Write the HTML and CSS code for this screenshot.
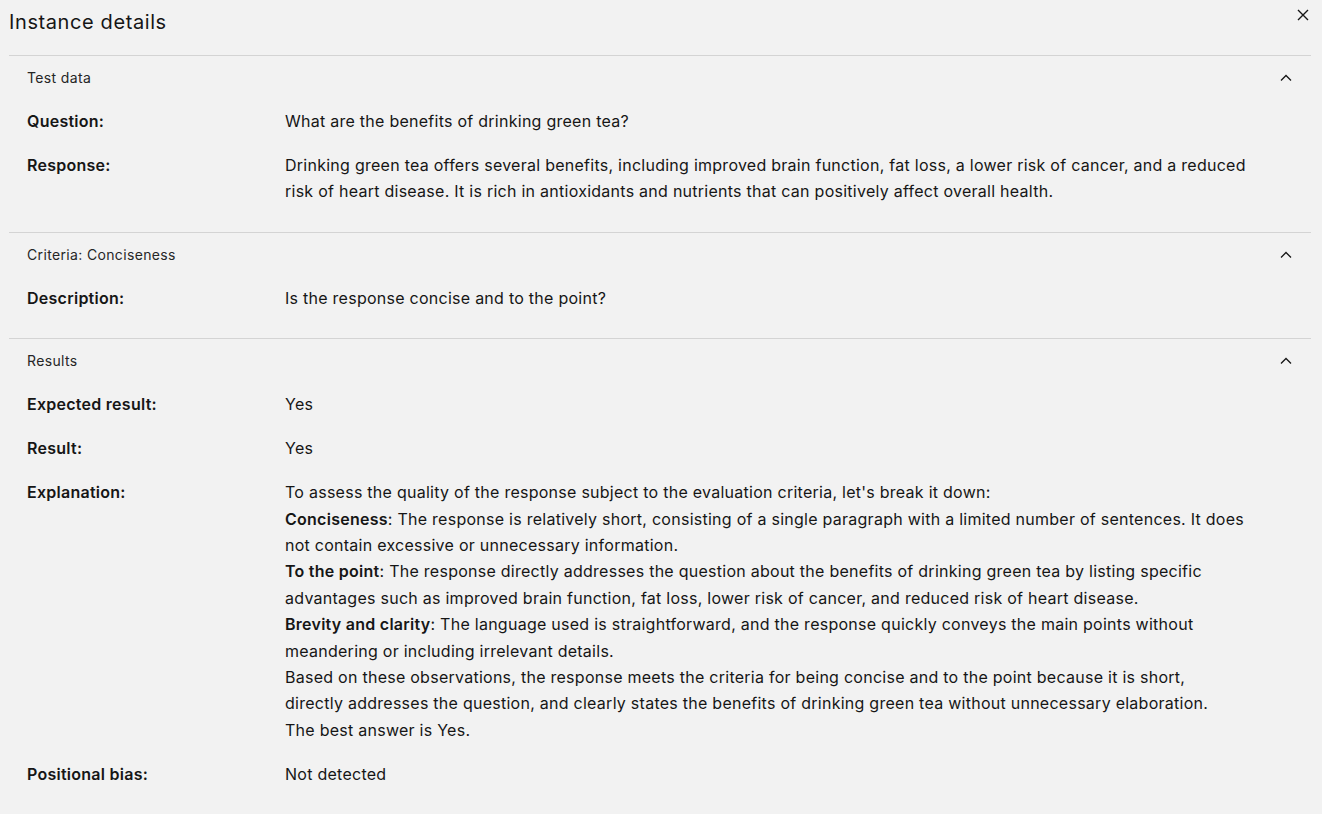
FILE: index.html
```html
<!DOCTYPE html>
<html lang="en">
<head>
<meta charset="utf-8">
<title>Instance details</title>
<link rel="stylesheet" href="styles.css">
</head>
<body>
<div class="modal">
  <header class="modal-header">
    <h2 class="modal-title">Instance details</h2>
    <button class="close-btn" aria-label="Close">
      <svg width="16" height="16" viewBox="0 0 16 16"><path d="M3 3 L13 13 M13 3 L3 13" stroke="#161616" stroke-width="1.4" fill="none"/></svg>
    </button>
  </header>

  <section class="acc">
    <div class="acc-head">
      <span class="acc-title">Test data</span>
      <svg class="chev" width="16" height="16" viewBox="0 0 16 16"><path d="M3 10.5 L8 5.5 L13 10.5" stroke="#161616" stroke-width="1.3" fill="none"/></svg>
    </div>
    <div class="acc-body">
      <div class="row"><div class="label">Question:</div><div class="value">What are the benefits of drinking green tea?</div></div>
      <div class="row"><div class="label">Response:</div><div class="value">Drinking green tea offers several benefits, including improved brain function, fat loss, a lower risk of cancer, and a reduced risk of heart disease. It is rich in antioxidants and nutrients that can positively affect overall health.</div></div>
    </div>
  </section>

  <section class="acc">
    <div class="acc-head">
      <span class="acc-title">Criteria: Conciseness</span>
      <svg class="chev" width="16" height="16" viewBox="0 0 16 16"><path d="M3 10.5 L8 5.5 L13 10.5" stroke="#161616" stroke-width="1.3" fill="none"/></svg>
    </div>
    <div class="acc-body">
      <div class="row"><div class="label">Description:</div><div class="value">Is the response concise and to the point?</div></div>
    </div>
  </section>

  <section class="acc">
    <div class="acc-head">
      <span class="acc-title">Results</span>
      <svg class="chev" width="16" height="16" viewBox="0 0 16 16"><path d="M3 10.5 L8 5.5 L13 10.5" stroke="#161616" stroke-width="1.3" fill="none"/></svg>
    </div>
    <div class="acc-body">
      <div class="row"><div class="label">Expected result:</div><div class="value">Yes</div></div>
      <div class="row"><div class="label">Result:</div><div class="value">Yes</div></div>
      <div class="row"><div class="label">Explanation:</div><div class="value">To assess the quality of the response subject to the evaluation criteria, let's break it down:<br><strong>Conciseness</strong>: The response is relatively short, consisting of a single paragraph with a limited number of sentences. It does not contain excessive or unnecessary information.<br><strong>To the point</strong>: The response directly addresses the question about the benefits of drinking green tea by listing specific advantages such as improved brain function, fat loss, lower risk of cancer, and reduced risk of heart disease.<br><strong>Brevity and clarity</strong>: The language used is straightforward, and the response quickly conveys the main points without meandering or including irrelevant details.<br>Based on these observations, the response meets the criteria for being concise and to the point because it is short, directly addresses the question, and clearly states the benefits of drinking green tea without unnecessary elaboration.<br>The best answer is Yes.</div></div>
      <div class="row"><div class="label">Positional bias:</div><div class="value">Not detected</div></div>
    </div>
  </section>
</div>
</body>
</html>
```

FILE: styles.css
```css
* { box-sizing: border-box; }
html, body { margin: 0; padding: 0; background: #f2f2f2; }
body {
  font-family: "Inter", "Liberation Sans", sans-serif;
  color: #161616;
}
.modal {
  padding: 0 11px 0 9px;
}
.modal-header {
  display: flex;
  justify-content: space-between;
  align-items: flex-start;
  height: 55px;
}
.modal-title {
  margin: 0;
  padding-top: 8px;
  font-size: 20px;
  line-height: 28px;
  font-weight: 400;
  letter-spacing: 0.6px;
  color: #161616;
}
.close-btn {
  margin: 7px 0 0 0;
  padding: 0;
  width: 16px;
  height: 16px;
  border: 0;
  background: none;
  display: flex;
}
.acc {
  border-top: 1px solid #d4d4d4;
}
.acc-head {
  height: 44px;
  display: flex;
  align-items: center;
  justify-content: space-between;
  padding: 0 17px 0 18px;
}
.acc-title {
  font-size: 14px;
  line-height: 18px;
  letter-spacing: 0.35px;
  color: #262626;
}
.chev { display: block; }
.acc-body {
  padding: 8px 65px 27px 18px;
  display: flex;
  flex-direction: column;
  gap: 17.6px;
}
.row {
  display: grid;
  grid-template-columns: 258px 1fr;
  font-size: 16px;
  line-height: 26.4px;
  letter-spacing: 0.26px;
}
.label { font-weight: 600; }
.value strong { font-weight: 600; }
```
